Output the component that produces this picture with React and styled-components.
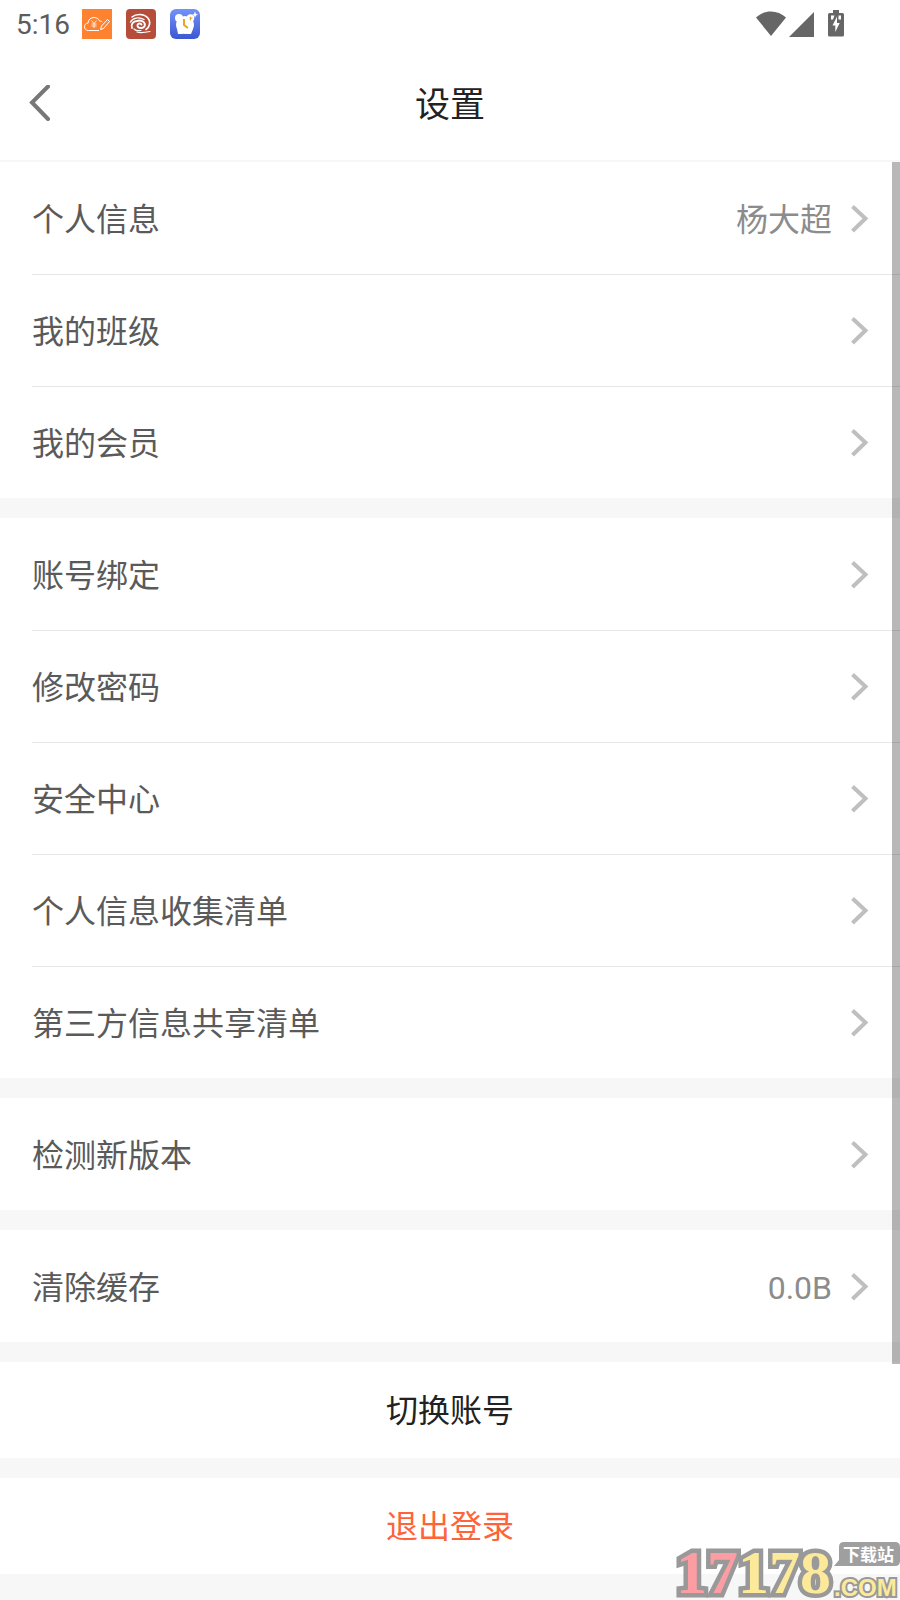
import React from "react";
import styled, { createGlobalStyle } from "styled-components";

const GlobalStyle = createGlobalStyle`
  * {
    box-sizing: border-box;
  }

  body {
    margin: 0;
    background: #f7f7f7;
    font-family: Roboto, "Noto Sans CJK SC", sans-serif;
  }

  button {
    margin: 0;
    border: 0;
    font-family: inherit;
    cursor: pointer;
  }

  svg {
    display: block;
    flex: none;
  }
`;

const Page = styled.div`
  position: relative;
  display: flex;
  flex-direction: column;
  min-height: 100vh;
`;

const StatusBar = styled.div`
  display: flex;
  align-items: center;
  justify-content: space-between;
  height: 48px;
  padding: 0 56px 0 16px;
  background: #ffffff;
`;

const StatusGroup = styled.div`
  display: flex;
  align-items: center;
  gap: ${(props) => props.$gap}px;
`;

const Time = styled.span`
  padding-top: 2px;
  font-size: 28px;
  line-height: 32px;
  color: #5c5c5c;
`;

const NavBar = styled.header`
  display: grid;
  grid-template-columns: 80px 1fr 80px;
  align-items: center;
  height: 114px;
  background: #ffffff;
  border-bottom: 2px solid #f7f7f7;
`;

const BackButton = styled.button`
  height: 80px;
  padding: 0 0 0 28px;
  background: transparent;
`;

const Title = styled.h1`
  margin: 0;
  padding-top: 4px;
  font-size: 35px;
  line-height: 48px;
  font-weight: 400;
  text-align: center;
  color: #222222;
`;

const Content = styled.main`
  position: relative;
  flex: 1;
  display: flex;
  flex-direction: column;
  gap: 20px;
  padding-bottom: 26px;
`;

const ScrollThumb = styled.div`
  position: absolute;
  top: 0;
  right: 0;
  bottom: 236px;
  width: 8px;
  background: rgba(0, 0, 0, 0.28);
`;

const Group = styled.section`
  background: #ffffff;
`;

const Row = styled.button`
  display: block;
  width: 100%;
  padding: 0 0 0 32px;
  background: transparent;
  text-align: left;
`;

const RowInner = styled.span`
  display: flex;
  align-items: center;
  height: 112px;
  padding-right: 31px;
  border-top: 1px solid ${(props) => (props.$divided ? "#e6e6e6" : "transparent")};
`;

const RowLabel = styled.span`
  flex: 1;
  padding-top: 2px;
  font-size: 32px;
  line-height: 44px;
  color: #5a5a5a;
`;

const RowValue = styled.span`
  margin-right: 19px;
  padding-top: 2px;
  font-size: 32px;
  line-height: 44px;
  color: #8c8c8c;
`;

const ActionButton = styled.button`
  height: 96px;
  padding: 2px 0 0;
  background: #ffffff;
  font-size: 32px;
  line-height: 44px;
  color: ${(props) => (props.$danger ? "#ff6339" : "#222222")};
`;

const Watermark = styled.div`
  position: absolute;
  right: 0;
  bottom: 0;
  pointer-events: none;
`;

const groups = [
  [
    { label: "个人信息", value: "杨大超" },
    { label: "我的班级" },
    { label: "我的会员" },
  ],
  [
    { label: "账号绑定" },
    { label: "修改密码" },
    { label: "安全中心" },
    { label: "个人信息收集清单" },
    { label: "第三方信息共享清单" },
  ],
  [{ label: "检测新版本" }],
  [{ label: "清除缓存", value: "0.0B" }],
];

const CloudApp = () => (
  <svg width="30" height="30" viewBox="0 0 30 30" fill="none" stroke="#fff">
    <rect width="30" height="30" fill="#ff8231" stroke="none" />
    <path d="M17 21.500H6.500C3.500 21.500 2.500 19.500 2.500 17.800C2.500 15.500 4 14.300 6 14C6.300 10.500 8.800 8.500 12 8.500C14.800 8.500 17 10 17.800 12.300C18.800 12 19.500 12.200 20.200 13" />
    <path d="M18.500 20.500L19.500 17L25.500 10.500L27.500 12.500L21.500 19.500Z" />
    <path d="M9.500 11.500L12 14.500L14.500 11.500M12 14.500V19M9.500 15H14.500M9.500 17H14.500" strokeWidth="0.8" />
  </svg>
);

const SwirlApp = () => (
  <svg width="30" height="30" viewBox="0 0 30 30" fill="none" stroke="#fff" strokeLinecap="round">
    <rect width="30" height="30" rx="4" fill="#b54d3a" stroke="none" />
    <path d="M6 8C10 4.500 18 4.500 21.500 8.500C25.500 13 23.500 18 20 20.500" strokeWidth="1.600" />
    <path d="M4.500 13C6.500 9 13 7.500 18 10.500" strokeWidth="1.400" />
    <path d="M6 19C4.500 15.500 7 12 11 12C15.500 10.500 19.500 13.500 18.800 16.500C18 19.500 12.500 20 11.500 17C11 14.800 14 13.500 15.500 15.500" strokeWidth="1.900" />
    <path d="M8 20C9.500 21.500 12 22 15 21.500M11 23C14 24 19 23.500 24 22.500" strokeWidth="1.200" />
  </svg>
);

const ClockApp = () => (
  <svg width="30" height="30" viewBox="0 0 30 30">
    <defs>
      <linearGradient id="clock" x1="0" y1="0" x2="0" y2="1">
        <stop offset="0" stopColor="#7492fb" />
        <stop offset="1" stopColor="#3b57d2" />
      </linearGradient>
    </defs>
    <rect width="30" height="30" rx="6" fill="url(#clock)" />
    <circle cx="9" cy="9" r="4" fill="#fff" />
    <circle cx="20.500" cy="9" r="3.800" fill="#fff" />
    <path d="M7 20L8 25H12L14.500 24L17 25H21L23 20Z" fill="#fff" />
    <circle cx="15" cy="16" r="9" fill="#fff" />
    <path d="M14 10V16L18 19" fill="none" stroke="#e9a623" strokeWidth="2" />
    <path d="M25 2.500L26 5L28 5.500L26 6.500L25 8.500L24 6.500L22.500 5.500L24 5Z" fill="#fff" />
    <path d="M20 7L21 8.500L23 9L21 10L20.500 12L19.500 10Z" fill="#e9a623" />
  </svg>
);

const Wifi = () => (
  <svg width="30" height="26" viewBox="0 0 30 26">
    <path d="M0 6.500C8.500-1.500 21.500-1.500 30 6.500L15 25Z" fill="#666" />
  </svg>
);

const Signal = () => (
  <svg width="26" height="26" viewBox="0 0 26 26">
    <path d="M25 1V26H0Z" fill="#666" />
  </svg>
);

const Battery = () => (
  <svg width="16" height="28" viewBox="0 0 16 28">
    <path d="M5 0H11V3H14.500Q16 3 16 4.500V25Q16 26.500 14.500 26.500H1.500Q0 26.500 0 25V4.500Q0 3 1.500 3H5Z" fill="#666" />
    <path d="M3 5.500H6.500L5 9.500H3ZM9.500 5.500H13V9.500H10.500V5.500Z" fill="#fff" />
    <path d="M9 6.500L4.500 15.500H7.300V22L11.700 13H9Z" fill="#fff" />
  </svg>
);

const BackIcon = () => (
  <svg width="24" height="38" viewBox="0 0 24 38">
    <path d="M20 1.500L4 17.500L20 34" fill="none" stroke="#777" strokeWidth="4" strokeLinecap="round" />
  </svg>
);

const Chevron = () => (
  <svg width="18" height="28" viewBox="0 0 18 28">
    <path d="M1.500 1.500L14.500 13.500L1.500 26" fill="none" stroke="#bfbfbf" strokeWidth="4" />
  </svg>
);

const SiteLogo = () => (
  <svg width="224" height="60" viewBox="0 0 224 60" aria-label="17178.com">
    <text
      x="0"
      y="53"
      fontFamily="Liberation Serif"
      fontWeight="700"
      fontSize="62"
      fill="#fde99a"
      stroke="#999"
      strokeWidth="9"
      paintOrder="stroke"
    >
      <tspan fill="#fb9da3">17</tspan>
      <tspan>178</tspan>
    </text>
    <text x="158" y="56" fontFamily="Liberation Sans" fontWeight="700" fontSize="24" fill="#fde99a" stroke="#999" strokeWidth="4" paintOrder="stroke">
      .COM
    </text>
    <path d="M168 2H219Q224 2 224 7V21Q224 26 219 26H158L163 20V7Q163 2 168 2Z" fill="#9f9f9f" />
    <text x="167" y="21" fontFamily="Noto Sans CJK SC" fontWeight="700" fontSize="17" fill="#fff">
      下载站
    </text>
  </svg>
);

const SettingsGroup = ({ items }) => (
  <Group>
    {items.map((item, index) => (
      <Row key={item.label} type="button">
        <RowInner $divided={index > 0}>
          <RowLabel>{item.label}</RowLabel>
          {item.value && <RowValue>{item.value}</RowValue>}
          <Chevron />
        </RowInner>
      </Row>
    ))}
  </Group>
);

const App = () => (
  <Page>
    <GlobalStyle />
    <StatusBar>
      <StatusGroup $gap={12}>
        <Time>5:16</Time>
        <StatusGroup $gap={14}>
          <CloudApp />
          <SwirlApp />
          <ClockApp />
        </StatusGroup>
      </StatusGroup>
      <StatusGroup $gap={13}>
        <StatusGroup $gap={3}>
          <Wifi />
          <Signal />
        </StatusGroup>
        <Battery />
      </StatusGroup>
    </StatusBar>
    <NavBar>
      <BackButton type="button" aria-label="返回">
        <BackIcon />
      </BackButton>
      <Title>设置</Title>
    </NavBar>
    <Content>
      {groups.map((items) => (
        <SettingsGroup key={items[0].label} items={items} />
      ))}
      <ActionButton type="button">切换账号</ActionButton>
      <ActionButton type="button" $danger>
        退出登录
      </ActionButton>
      <ScrollThumb />
    </Content>
    <Watermark>
      <SiteLogo />
    </Watermark>
  </Page>
);

export default App;
